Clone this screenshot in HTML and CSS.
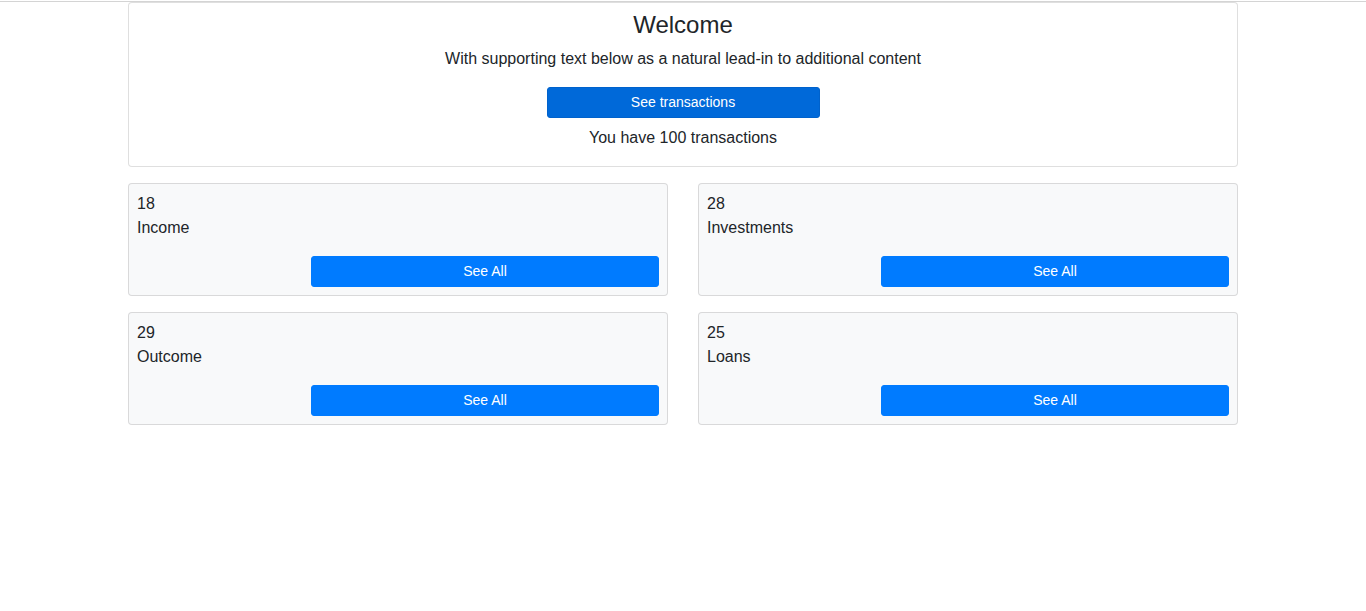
FILE: index.html
```html
<!DOCTYPE html>
<html lang="en">
<head>
<meta charset="utf-8">
<title>Dashboard</title>
<link rel="stylesheet" href="styles.css">
</head>
<body>
<div class="topline"></div>
<div class="container">
  <div class="card welcome">
    <h4 class="title">Welcome</h4>
    <p class="lead-in">With supporting text below as a natural lead-in to additional content</p>
    <button class="btn btn-dark-primary">See transactions</button>
    <p class="count">You have 100 transactions</p>
  </div>
  <div class="grid">
    <div class="card stat">
      <div class="num">18</div>
      <div class="label">Income</div>
      <div class="actions"><button class="btn btn-primary">See All</button></div>
    </div>
    <div class="card stat">
      <div class="num">28</div>
      <div class="label">Investments</div>
      <div class="actions"><button class="btn btn-primary">See All</button></div>
    </div>
    <div class="card stat">
      <div class="num">29</div>
      <div class="label">Outcome</div>
      <div class="actions"><button class="btn btn-primary">See All</button></div>
    </div>
    <div class="card stat">
      <div class="num">25</div>
      <div class="label">Loans</div>
      <div class="actions"><button class="btn btn-primary">See All</button></div>
    </div>
  </div>
</div>
</body>
</html>
```
FILE: styles.css
```css
* { box-sizing: border-box; }
html, body { margin: 0; padding: 0; }
body {
  font-family: "Liberation Sans", Arial, sans-serif;
  font-size: 16px;
  line-height: 1.5;
  color: #212529;
  background: #fff;
}
.topline {
  margin-top: 1px;
  height: 1px;
  background: #d4d4d4;
}
.container {
  width: 1140px;
  padding: 0 15px;
  margin: 0 auto;
}
.card {
  border: 1px solid rgba(0,0,0,.125);
  border-radius: 4px;
  background: #fff;
}
.welcome {
  padding: 8px;
  text-align: center;
  display: flex;
  flex-direction: column;
  align-items: center;
}
.title {
  margin: 0 0 7px;
  font-size: 24px;
  font-weight: 400;
  line-height: 1.2;
}
.lead-in { margin: 0 0 16px; }
.count { margin: 8px 0 8px; }
.btn {
  font-family: inherit;
  font-size: 14px;
  line-height: 1.5;
  padding: 4px 8px;
  border-radius: 3px;
  color: #fff;
  border: 1px solid transparent;
  cursor: pointer;
  display: block;
}
.btn-dark-primary {
  width: 273px;
  background: #0069d9;
  border-color: #0062cc;
}
.btn-primary {
  width: 100%;
  background: #007bff;
  border-color: #007bff;
}
.grid {
  margin-top: 16px;
  display: grid;
  grid-template-columns: 1fr 1fr;
  column-gap: 30px;
  row-gap: 16px;
}
.stat {
  background: #f8f9fa;
  padding: 8px;
}
.label { margin-bottom: 16px; }
.actions {
  display: grid;
  grid-template-columns: 1fr 2fr;
}
.actions .btn { grid-column: 2; }
```
